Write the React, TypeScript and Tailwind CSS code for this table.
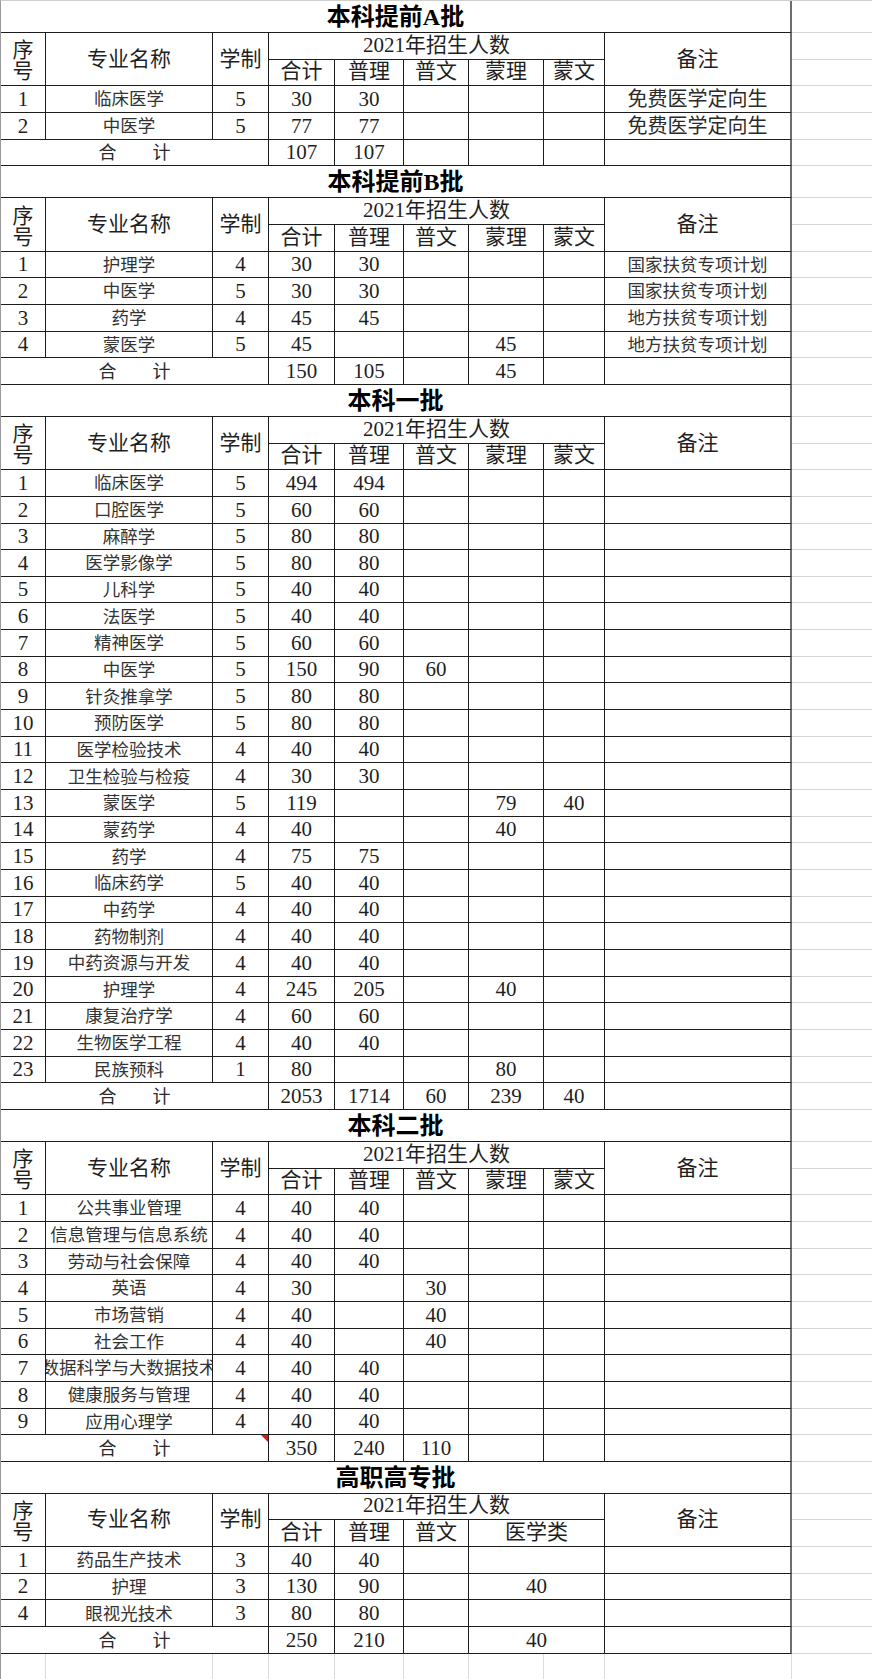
import React from "react";

type Row = { no: string; name: string; yr: string; v: string[]; note?: string };
type SectionData = {
  title: string;
  rows: Row[];
  total: string[];
  noteSize: "lg" | "sm";
  medical?: boolean;
  comment?: boolean;
};

const sections: SectionData[] = [
  {
    title: "本科提前A批",
    noteSize: "lg",
    rows: [
      { no: "1", name: "临床医学", yr: "5", v: ["30", "30", "", "", ""], note: "免费医学定向生" },
      { no: "2", name: "中医学", yr: "5", v: ["77", "77", "", "", ""], note: "免费医学定向生" },
    ],
    total: ["107", "107", "", "", ""],
  },
  {
    title: "本科提前B批",
    noteSize: "sm",
    rows: [
      { no: "1", name: "护理学", yr: "4", v: ["30", "30", "", "", ""], note: "国家扶贫专项计划" },
      { no: "2", name: "中医学", yr: "5", v: ["30", "30", "", "", ""], note: "国家扶贫专项计划" },
      { no: "3", name: "药学", yr: "4", v: ["45", "45", "", "", ""], note: "地方扶贫专项计划" },
      { no: "4", name: "蒙医学", yr: "5", v: ["45", "", "", "45", ""], note: "地方扶贫专项计划" },
    ],
    total: ["150", "105", "", "45", ""],
  },
  {
    title: "本科一批",
    noteSize: "sm",
    rows: [
      { no: "1", name: "临床医学", yr: "5", v: ["494", "494", "", "", ""] },
      { no: "2", name: "口腔医学", yr: "5", v: ["60", "60", "", "", ""] },
      { no: "3", name: "麻醉学", yr: "5", v: ["80", "80", "", "", ""] },
      { no: "4", name: "医学影像学", yr: "5", v: ["80", "80", "", "", ""] },
      { no: "5", name: "儿科学", yr: "5", v: ["40", "40", "", "", ""] },
      { no: "6", name: "法医学", yr: "5", v: ["40", "40", "", "", ""] },
      { no: "7", name: "精神医学", yr: "5", v: ["60", "60", "", "", ""] },
      { no: "8", name: "中医学", yr: "5", v: ["150", "90", "60", "", ""] },
      { no: "9", name: "针灸推拿学", yr: "5", v: ["80", "80", "", "", ""] },
      { no: "10", name: "预防医学", yr: "5", v: ["80", "80", "", "", ""] },
      { no: "11", name: "医学检验技术", yr: "4", v: ["40", "40", "", "", ""] },
      { no: "12", name: "卫生检验与检疫", yr: "4", v: ["30", "30", "", "", ""] },
      { no: "13", name: "蒙医学", yr: "5", v: ["119", "", "", "79", "40"] },
      { no: "14", name: "蒙药学", yr: "4", v: ["40", "", "", "40", ""] },
      { no: "15", name: "药学", yr: "4", v: ["75", "75", "", "", ""] },
      { no: "16", name: "临床药学", yr: "5", v: ["40", "40", "", "", ""] },
      { no: "17", name: "中药学", yr: "4", v: ["40", "40", "", "", ""] },
      { no: "18", name: "药物制剂", yr: "4", v: ["40", "40", "", "", ""] },
      { no: "19", name: "中药资源与开发", yr: "4", v: ["40", "40", "", "", ""] },
      { no: "20", name: "护理学", yr: "4", v: ["245", "205", "", "40", ""] },
      { no: "21", name: "康复治疗学", yr: "4", v: ["60", "60", "", "", ""] },
      { no: "22", name: "生物医学工程", yr: "4", v: ["40", "40", "", "", ""] },
      { no: "23", name: "民族预科", yr: "1", v: ["80", "", "", "80", ""] },
    ],
    total: ["2053", "1714", "60", "239", "40"],
  },
  {
    title: "本科二批",
    noteSize: "sm",
    comment: true,
    rows: [
      { no: "1", name: "公共事业管理", yr: "4", v: ["40", "40", "", "", ""] },
      { no: "2", name: "信息管理与信息系统", yr: "4", v: ["40", "40", "", "", ""] },
      { no: "3", name: "劳动与社会保障", yr: "4", v: ["40", "40", "", "", ""] },
      { no: "4", name: "英语", yr: "4", v: ["30", "", "30", "", ""] },
      { no: "5", name: "市场营销", yr: "4", v: ["40", "", "40", "", ""] },
      { no: "6", name: "社会工作", yr: "4", v: ["40", "", "40", "", ""] },
      { no: "7", name: "数据科学与大数据技术", yr: "4", v: ["40", "40", "", "", ""] },
      { no: "8", name: "健康服务与管理", yr: "4", v: ["40", "40", "", "", ""] },
      { no: "9", name: "应用心理学", yr: "4", v: ["40", "40", "", "", ""] },
    ],
    total: ["350", "240", "110", "", ""],
  },
  {
    title: "高职高专批",
    noteSize: "sm",
    medical: true,
    rows: [
      { no: "1", name: "药品生产技术", yr: "3", v: ["40", "40", "", ""] },
      { no: "2", name: "护理", yr: "3", v: ["130", "90", "", "40"] },
      { no: "4", name: "眼视光技术", yr: "3", v: ["80", "80", "", ""] },
    ],
    total: ["250", "210", "", "40"],
  },
];

function Cell({ children, className = "" }: { children?: React.ReactNode; className?: string }) {
  return (
    <div
      className={`flex justify-center overflow-hidden whitespace-nowrap border-r border-b border-[#1c1c1c] leading-none ${className}`}
    >
      {children}
    </div>
  );
}

function NoteCell({ children, className = "" }: { children?: React.ReactNode; className?: string }) {
  return (
    <div
      className={`flex justify-center overflow-hidden whitespace-nowrap border-r-2 border-b border-r-[#6e6e6e] border-b-[#1c1c1c] leading-none ${className}`}
    >
      {children}
    </div>
  );
}

function Filler() {
  return <div className="border-b border-[#d6d6d6]" />;
}

function Section({ s }: { s: SectionData }) {
  const noteText = s.noteSize === "lg" ? "text-[20px] text-[#2a2a2a]" : "text-[17.5px] text-[#333]";
  return (
    <>
      <div className="flex h-[32px]">
        <div className="flex w-[791px] items-center justify-center border-r-2 border-b border-r-[#6e6e6e] border-b-[#1c1c1c] pt-[1px] text-[24px] font-bold text-black">
          {s.title}
        </div>
        <div className="flex-1 border-b border-[#d6d6d6]" />
      </div>
      <div className="grid auto-rows-[26.67px] grid-cols-[45px_167px_56px_66px_69px_65px_75px_61px_187px_1fr] text-[21px] text-[#1f1f1f]">
        <Cell className="row-span-2 flex-col items-center justify-end pb-[3px] leading-[23px]">
          <span>序</span>
          <span>号</span>
        </Cell>
        <Cell className="row-span-2 items-center">专业名称</Cell>
        <Cell className="row-span-2 items-center">学制</Cell>
        <Cell className="col-span-5 items-end pb-[3px]">2021年招生人数</Cell>
        <NoteCell className="row-span-2 items-center">备注</NoteCell>
        <Filler />
        <Cell className="items-end pb-[3px]">合计</Cell>
        <Cell className="items-end pb-[3px]">普理</Cell>
        <Cell className="items-end pb-[3px]">普文</Cell>
        {s.medical ? (
          <Cell className="col-span-2 items-end pb-[3px]">医学类</Cell>
        ) : (
          <>
            <Cell className="items-end pb-[3px]">蒙理</Cell>
            <Cell className="items-end pb-[3px]">蒙文</Cell>
          </>
        )}
        <Filler />

        {s.rows.map((r) => (
          <React.Fragment key={r.no + r.name}>
            <Cell className="items-end pb-[2px]">{r.no}</Cell>
            <Cell className="items-end pb-[3px] text-[17.5px] text-[#333]">{r.name}</Cell>
            <Cell className="items-end pb-[2px]">{r.yr}</Cell>
            {r.v.map((x, i) => (
              <Cell
                key={i}
                className={`items-end pb-[2px] ${s.medical && i === 3 ? "col-span-2" : ""}`}
              >
                {x}
              </Cell>
            ))}
            <NoteCell className={`items-end pb-[3px] ${noteText}`}>{r.note}</NoteCell>
            <Filler />
          </React.Fragment>
        ))}

        <Cell className="relative col-span-3 items-end pb-[3px] text-[18px] text-[#2a2a2a]">
          合　　计
          {s.comment && (
            <span className="absolute top-0 right-0 h-0 w-0 border-t-[7px] border-l-[7px] border-t-[#e0151b] border-l-transparent" />
          )}
        </Cell>
        {s.total.map((x, i) => (
          <Cell key={i} className={`items-end pb-[2px] ${s.medical && i === 3 ? "col-span-2" : ""}`}>
            {x}
          </Cell>
        ))}
        <NoteCell />
        <Filler />
      </div>
    </>
  );
}

export default function App() {
  return (
    <div className="min-h-[1679px] w-[872px] bg-white font-['Liberation_Serif','Noto_Sans_CJK_SC',serif]">
      <div className="border-t border-l border-t-[#cfcfcf] border-l-[#9a9a9a]">
        {sections.map((s) => (
          <Section key={s.title} s={s} />
        ))}
        <div className="grid h-[27px] grid-cols-[45px_167px_56px_66px_69px_65px_75px_61px_187px_1fr]">
          {Array.from({ length: 9 }).map((_, i) => (
            <div key={i} className="border-r border-b border-[#dcdcdc]" />
          ))}
          <div className="border-b border-[#dcdcdc]" />
        </div>
      </div>
    </div>
  );
}
